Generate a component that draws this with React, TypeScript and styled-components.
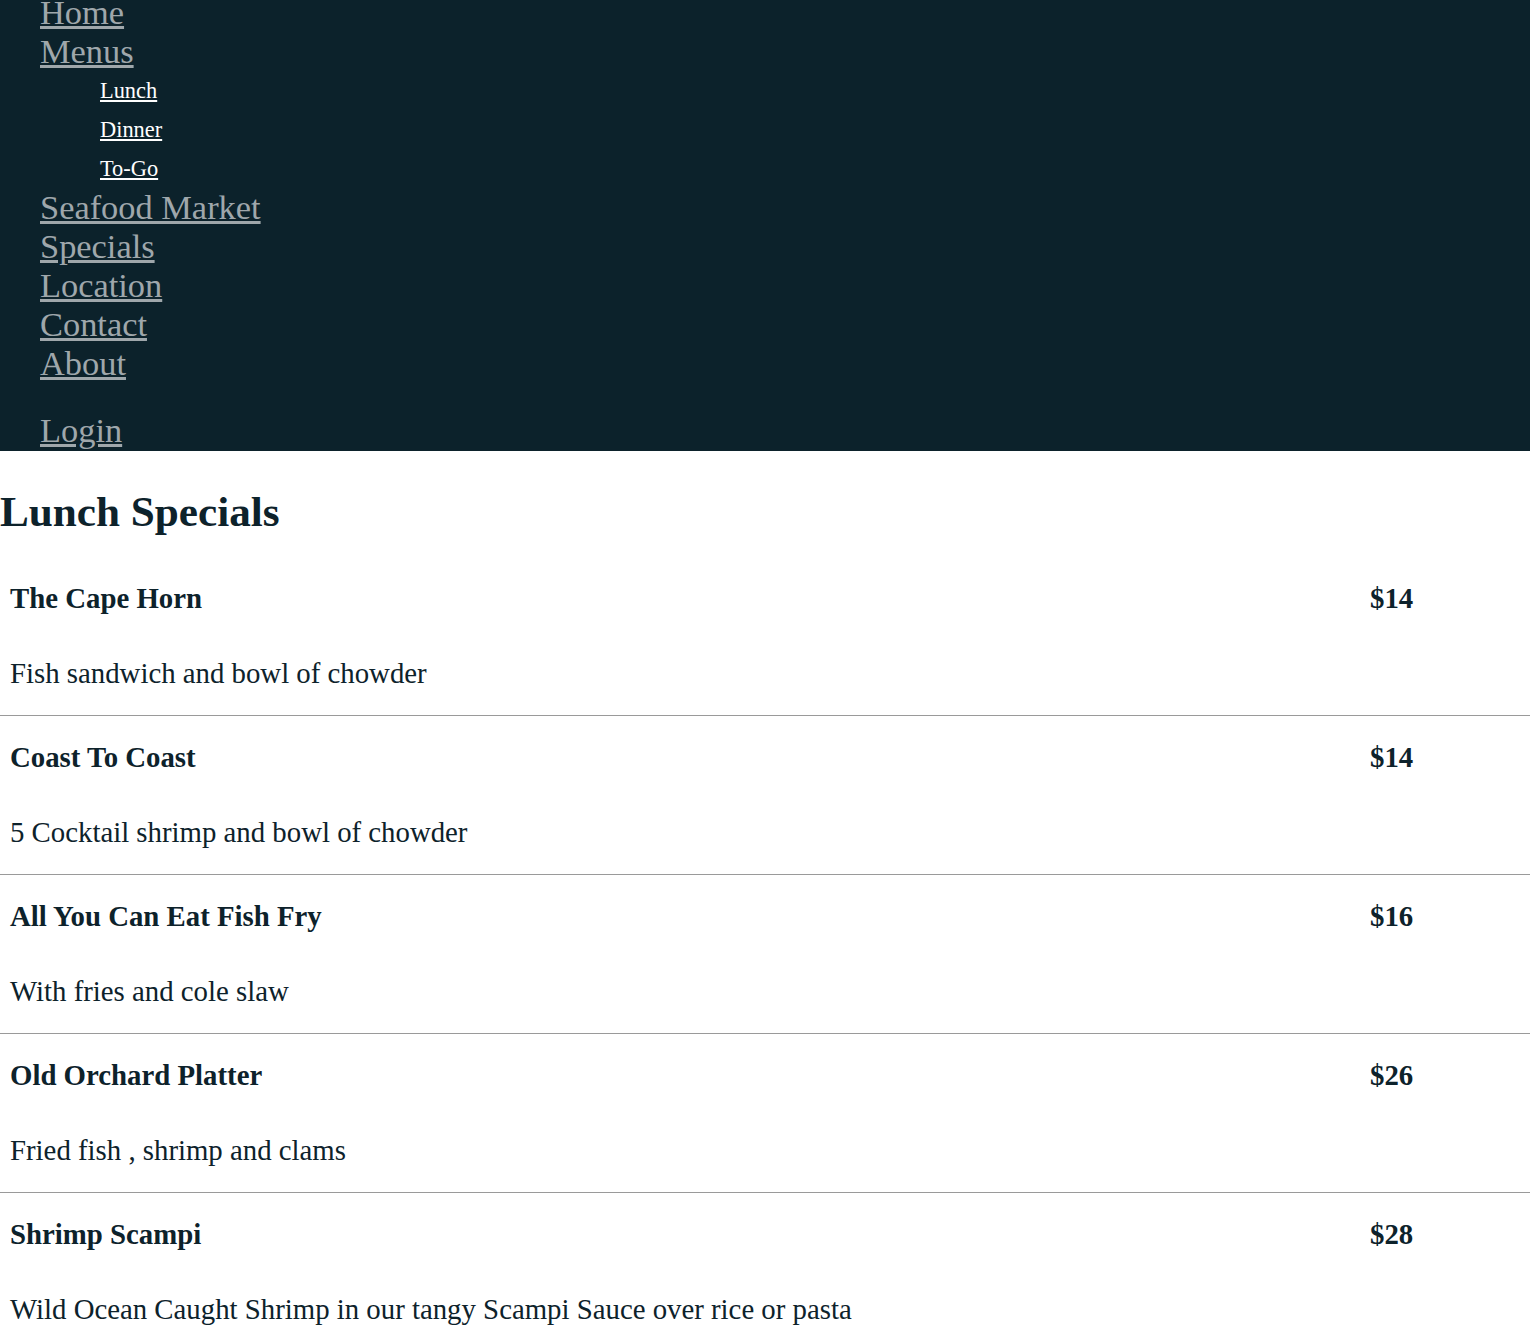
import React from 'react'
import styled, { createGlobalStyle } from 'styled-components'

interface Special {
  name: string
  price: string
  description: string
}

const specials: Special[] = [
  { name: 'The Cape Horn', price: '$14', description: 'Fish sandwich and bowl of chowder' },
  { name: 'Coast To Coast', price: '$14', description: '5 Cocktail shrimp and bowl of chowder' },
  { name: 'All You Can Eat Fish Fry', price: '$16', description: 'With fries and cole slaw' },
  { name: 'Old Orchard Platter', price: '$26', description: 'Fried fish , shrimp and clams' },
  {
    name: 'Shrimp Scampi',
    price: '$28',
    description: 'Wild Ocean Caught Shrimp in our tangy Scampi Sauce over rice or pasta',
  },
]

const mainLinks = ['Seafood Market', 'Specials', 'Location', 'Contact', 'About']
const menuLinks = ['Lunch', 'Dinner', 'To-Go']

export default function App() {
  return (
    <>
      <GlobalStyle />
      <Nav>
        <NavList>
          <NavItem><NavLink href="#">Home</NavLink></NavItem>
          <NavItem>
            <NavLink href="#">Menus</NavLink>
            <SubList>
              {menuLinks.map(link => (
                <SubItem key={link}><SubLink href="#">{link}</SubLink></SubItem>
              ))}
            </SubList>
          </NavItem>
          {mainLinks.map(link => (
            <NavItem key={link}><NavLink href="#">{link}</NavLink></NavItem>
          ))}
        </NavList>
        <LoginRow><NavLink href="#">Login</NavLink></LoginRow>
      </Nav>

      <Main>
        <Title>Lunch Specials</Title>
        <Menu>
          {specials.map(item => (
            <Entry key={item.name}>
              <Name>{item.name}</Name>
              <Price>{item.price}</Price>
              <Description>{item.description}</Description>
            </Entry>
          ))}
        </Menu>
      </Main>
    </>
  )
}

const GlobalStyle = createGlobalStyle`
  html, body {
    margin: 0;
    padding: 0;
    background: #ffffff;
    font-family: "Liberation Serif", "Times New Roman", serif;
    color: #0d222b;
  }
`

const Nav = styled.nav`
  background-color: #0c222b;
  padding: 0 0 1px 40px;
  margin-top: -7px;
`

const NavList = styled.ul`
  list-style: none;
  margin: 0;
  padding: 0;
`

const NavItem = styled.li`
  font-size: 34.4px;
  line-height: 39px;
`

const NavLink = styled.a`
  color: #9fa7ab;
  text-decoration: underline;
`

const SubList = styled.ul`
  list-style: none;
  margin: 0;
  padding: 0 0 0 60px;
`

const SubItem = styled.li`
  font-size: 22.4px;
  line-height: 26px;
  padding: 6.5px 0;
`

const SubLink = styled.a`
  color: #ffffff;
  text-decoration: underline;
`

const LoginRow = styled.div`
  font-size: 34.4px;
  line-height: 39px;
  padding-top: 28px;
`

const Main = styled.main`
  padding: 0;
`

const Title = styled.h1`
  font-size: 43.2px;
  line-height: 50px;
  font-weight: 700;
  margin: 36px 0 20px;
`

const Menu = styled.div`
  display: flex;
  flex-direction: column;
`

const Entry = styled.div`
  display: grid;
  grid-template-columns: 1fr 170px;
  grid-template-rows: auto auto;
  border-bottom: 1px solid #9a9a9a;
  padding: 25px 0 25px;
  row-gap: 42px;
  font-size: 28.8px;
  line-height: 33px;
`

const Name = styled.div`
  font-weight: 700;
  padding-left: 10px;
`

const Price = styled.div`
  font-weight: 700;
  padding-left: 10px;
`

const Description = styled.div`
  grid-column: 1 / span 2;
  padding-left: 10px;
`
